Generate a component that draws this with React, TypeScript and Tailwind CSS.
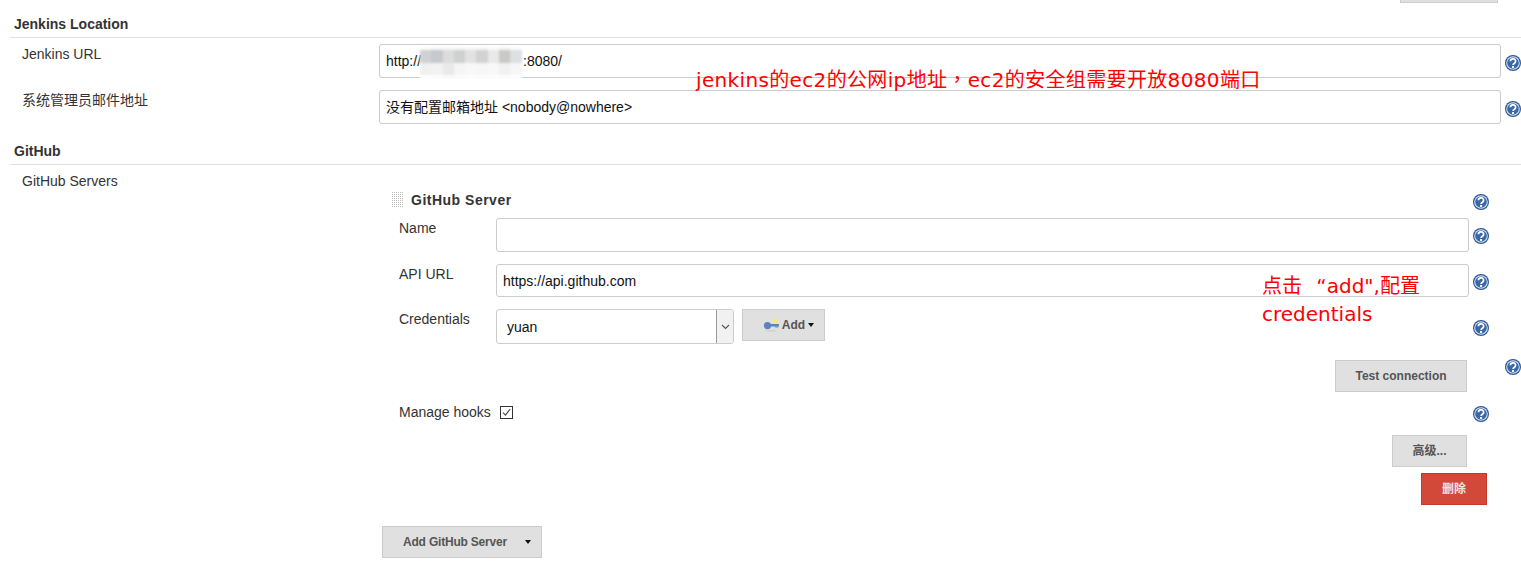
import type { ReactNode } from "react";

const mosaicCols = 9;
const mosaic = [
  "#fbfbfb", "#f6f6f6", "#f6f6f6", "#f6f6f6", "#f8f8f8", "#f6f6f6", "#fafafa", "#f4f4f4", "#fbfbfb",
  "#d0d1d3", "#c6c9cd", "#dcdcdc", "#cfd0d0", "#e2e2e2", "#d2d2d3", "#e9e9e9", "#c9c9c8", "#dcdfe3",
  "#f0f0f0", "#f2f2f2", "#e9e9e9", "#f5f5f5", "#f8f8f8", "#f6f6f6", "#f8f8f8", "#f1f1f1", "#f6f6f6",
  "#ffffff", "#fdfdfd", "#fbfbfb", "#fcfcfc", "#fefefe", "#fdfdfd", "#fefefe", "#fdfdfd", "#ffffff",
];

const gripDots = Array.from({ length: 48 }, (_, i) => ({ x: (i % 6) * 2, y: Math.floor(i / 6) * 2 }));

function HelpIcon() {
  return (
    <svg width="16" height="16" viewBox="0 0 16 16" className="shrink-0" aria-hidden>
      <circle cx="8" cy="8" r="8" fill="#2d5596" />
      <circle cx="8" cy="8" r="6.8" fill="#dfe7f2" />
      <circle cx="8" cy="8" r="5.8" fill="#3768a8" />
      <path d="M5.4 6.2a2.6 2.4 0 1 1 4 2c-1 .6-1.3 1-1.3 1.9" fill="none" stroke="#ffffff" strokeWidth="1.8" />
      <rect x="7" y="11" width="2.1" height="1.9" fill="#ffffff" />
    </svg>
  );
}

function Field({ children }: { children?: ReactNode }) {
  return (
    <div className="flex h-full w-full items-center rounded-[3px] border border-[#ccc] bg-white px-[6px] pt-[1px] text-[14px] text-[#111]">
      {children}
    </div>
  );
}

function ActionButton({ children, className }: { children: ReactNode; className: string }) {
  return (
    <button
      type="button"
      className={`flex items-center justify-center border border-[#ccc] bg-[#e0e0e0] text-[12px] font-bold text-[#555] ${className}`}
    >
      {children}
    </button>
  );
}

function Caret() {
  return <span className="h-0 w-0 border-x-[3.5px] border-t-[4px] border-x-transparent border-t-[#111]" />;
}

function SectionHeader({ title, className }: { title: string; className: string }) {
  return (
    <h2 className={`ml-[10px] h-[24px] border-b border-[#e0e0e0] pl-[4px] text-[14px] leading-[20px] font-bold text-[#333] ${className}`}>
      {title}
    </h2>
  );
}

function ServerRow({
  label,
  value,
  className,
  fieldClass,
}: {
  label: string;
  value?: string;
  className: string;
  fieldClass: string;
}) {
  return (
    <div className={`flex ${className}`}>
      <div className="w-[97px] text-[14px] leading-[20px] text-[#333]">{label}</div>
      <div className={`w-[973px] ${fieldClass}`}>
        <Field>{value}</Field>
      </div>
      <div className="mt-[10px] ml-[4px]">
        <HelpIcon />
      </div>
    </div>
  );
}

export default function App() {
  return (
    <div className="relative h-[571px] w-[1521px] overflow-hidden bg-white font-['Liberation_Sans','Noto_Sans_CJK_SC',sans-serif]">
      <div className="flex justify-end pr-[23px]">
        <div className="h-[3px] w-[98px] border-x border-b border-[#ccc] bg-[#e0e0e0]" />
      </div>

      <SectionHeader title="Jenkins Location" className="mt-[11px]" />

      <div className="mt-[6px] flex">
        <div className="w-[379px] pl-[22px] text-[14px] leading-[20px] text-[#333]">Jenkins URL</div>
        <div className="h-[34px] w-[1122px]">
          <Field>
            http://
            <span className="inline-block w-[102px]" />
            :8080/
          </Field>
        </div>
        <div className="mt-[11px] ml-[4px]">
          <HelpIcon />
        </div>
      </div>

      <div className="mt-[12px] flex">
        <div className="w-[379px] pl-[22px] text-[14px] leading-[20px] text-[#333]">系统管理员邮件地址</div>
        <div className="h-[34px] w-[1122px]">
          <Field>没有配置邮箱地址 &lt;nobody@nowhere&gt;</Field>
        </div>
        <div className="mt-[11px] ml-[4px]">
          <HelpIcon />
        </div>
      </div>

      <SectionHeader title="GitHub" className="mt-[17px]" />

      <div className="mt-[6px] flex">
        <div className="w-[379px] pl-[22px] text-[14px] leading-[20px] text-[#333]">GitHub Servers</div>

        <div className="w-[1142px]">
          <div className="mt-[21px] flex items-start pl-[13px]">
            <svg width="12" height="16" viewBox="0 0 12 16" className="shrink-0" aria-hidden>
              {gripDots.map((d, i) => (
                <rect key={i} x={d.x} y={d.y} width="1" height="1" fill="#bdbdbd" />
              ))}
            </svg>
            <div className="ml-[7px] w-[1062px] text-[14px] leading-[16px] font-bold tracking-[0.5px] text-[#333]">GitHub Server</div>
            <div className="mt-[2px]">
              <HelpIcon />
            </div>
          </div>

          <ServerRow label="Name" className="mt-[8px] pl-[20px]" fieldClass="h-[34px]" />
          <ServerRow label="API URL" value="https://api.github.com" className="mt-[12px] pl-[20px]" fieldClass="h-[33px]" />

          <div className="mt-[12px] flex pl-[20px]">
            <div className="w-[97px] text-[14px] leading-[20px] text-[#333]">Credentials</div>
            <div className="flex h-[35px] w-[238px] overflow-hidden rounded-[3px] border border-[#ccc] bg-white">
              <div className="flex flex-1 items-center pl-[10px] pt-[1px] text-[14px] text-[#111]">yuan</div>
              <div className="flex w-[17px] items-center justify-center border-l border-[#999] bg-[#f1f1f1]">
                <svg width="9" height="6" viewBox="0 0 9 6" aria-hidden>
                  <path d="M1 1l3.5 3.5L8 1" fill="none" stroke="#555" strokeWidth="1.1" />
                </svg>
              </div>
            </div>
            <ActionButton className="ml-[8px] h-[32px] w-[83px] gap-[3px] pl-[10px]">
              <svg width="16" height="14" viewBox="0 0 16 14" aria-hidden>
                <ellipse cx="8" cy="12.8" rx="5.5" ry="0.8" fill="#cfcfcf" />
                <circle cx="12.5" cy="2.8" r="2.2" fill="#f3ee6a" />
                <circle cx="4.5" cy="7.6" r="3.6" fill="#5b84b8" />
                <rect x="6" y="6" width="10" height="2.6" rx="0.8" fill="#5b84b8" />
                <rect x="12" y="8" width="3.4" height="1.6" fill="#7d9cc4" />
              </svg>
              Add
              <Caret />
            </ActionButton>
            <div className="mt-[11px] ml-[648px]">
              <HelpIcon />
            </div>
          </div>

          <div className="mt-[16px] flex justify-end">
            <ActionButton className="h-[32px] w-[132px]">Test connection</ActionButton>
            <div className="mt-[-1px] ml-[38px]">
              <HelpIcon />
            </div>
          </div>

          <div className="mt-[10px] flex pl-[20px]">
            <div className="flex h-[20px] w-[1074px] items-center text-[14px] text-[#333]">
              Manage hooks
              <span className="ml-[9px] flex h-[13px] w-[13px] items-center justify-center border border-[#333] bg-white">
                <svg width="11" height="11" viewBox="0 0 11 11" aria-hidden>
                  <path d="M2 5.5l2.4 2.6L9.2 2" fill="none" stroke="#444" strokeWidth="1.1" />
                </svg>
              </span>
            </div>
            <div className="mt-[4px]">
              <HelpIcon />
            </div>
          </div>

          <div className="mt-[13px] flex justify-end pr-[54px]">
            <ActionButton className="h-[32px] w-[75px]">高级...</ActionButton>
          </div>

          <div className="mt-[6px] flex justify-end pr-[34px]">
            <button
              type="button"
              className="flex h-[32px] w-[66px] items-center justify-center border border-[#c4392a] bg-[#d24939] text-[12px] font-bold text-[#f3e3e0]"
            >
              删除
            </button>
          </div>

          <ActionButton className="mt-[21px] ml-[3px] h-[32px] w-[160px] gap-[18px] pl-[10px] tracking-[-0.2px]">
            Add GitHub Server
            <Caret />
          </ActionButton>
        </div>
      </div>

      {/* blurred-out ip, painted over the field */}
      <div
        className="absolute top-[47px] left-[420px] grid grid-rows-[3px_13px_12px_4px] blur-[1px]"
        style={{ gridTemplateColumns: `repeat(${mosaicCols}, 11.3px)` }}
      >
        {mosaic.map((c, i) => (
          <div key={i} style={{ backgroundColor: c }} />
        ))}
      </div>

      {/* red notes pasted on top of the screenshot */}
      <div className="absolute top-[65px] left-[696px] font-['DejaVu_Sans','Noto_Sans_CJK_SC',sans-serif] text-[20px] leading-[28px] tracking-[0.35px] whitespace-nowrap text-[#ff0000]">
        jenkins的ec2的公网ip地址<span className="font-['Noto_Sans_CJK_TC',sans-serif]">，</span>ec2的安全组需要开放8080端口
      </div>
      <div className="absolute top-[272px] left-[1262px] font-['DejaVu_Sans','Noto_Sans_CJK_SC',sans-serif] text-[20px] leading-[28px] whitespace-nowrap text-[#ff0000]">
        点击 <span className="inline-block w-[8px]" />“add",配置
        <br />
        credentials
      </div>
    </div>
  );
}
